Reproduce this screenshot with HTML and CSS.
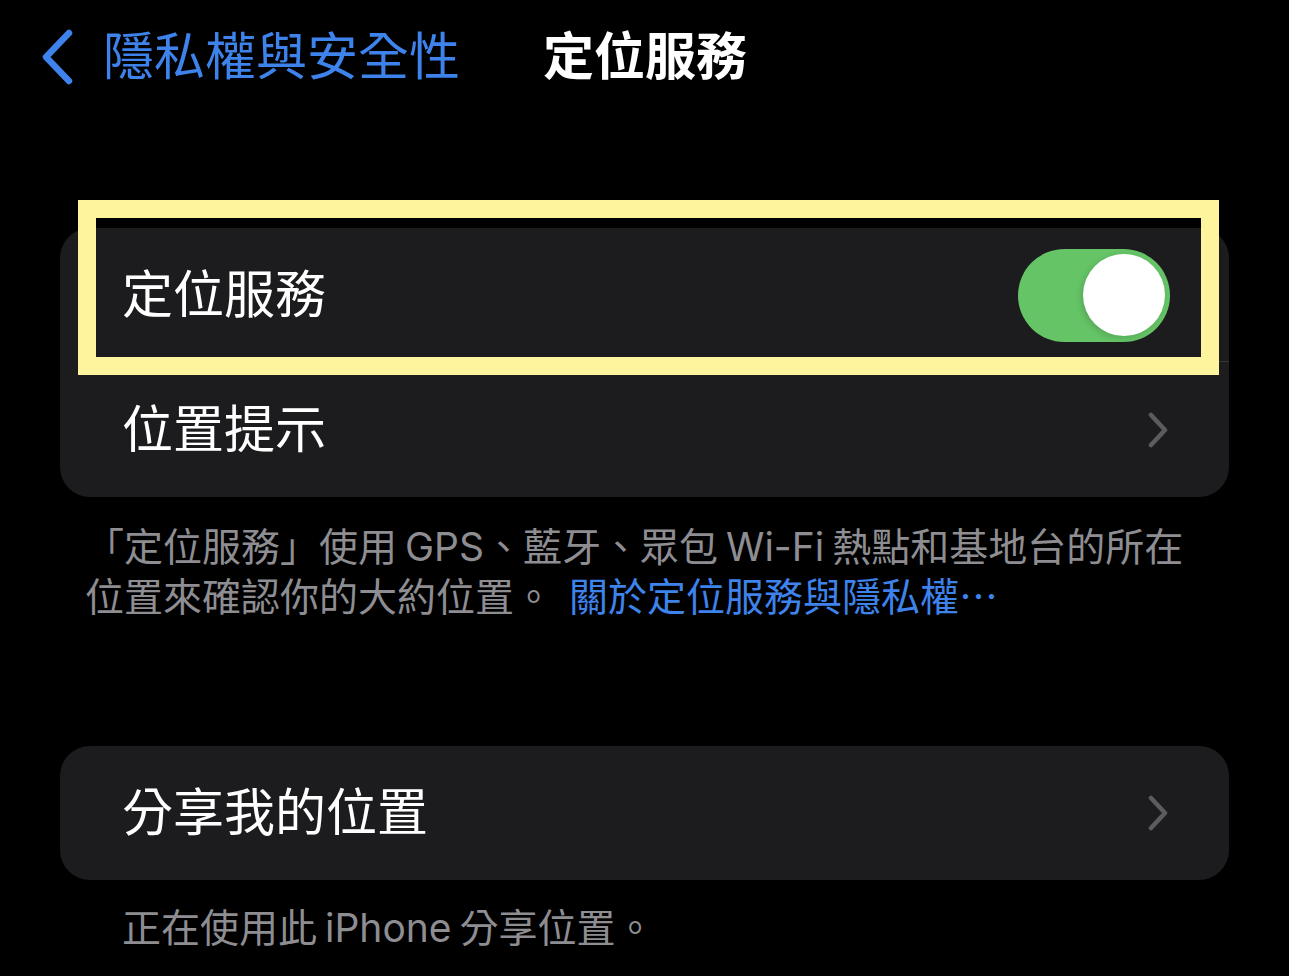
FILE: index.html
```html
<!DOCTYPE html>
<html lang="zh-Hant">
<head>
  <meta charset="UTF-8" />
  <meta name="viewport" content="width=device-width, initial-scale=1.0"/>
  <title>定位服務</title>
  <link rel="stylesheet" href="styles.css">
</head>
<body>

  <header class="navbar">
    <a class="back" href="#">
      <svg class="back-icon" width="36" height="58" viewBox="0 0 36 58">
        <path d="M30 5 L7 29 L30 53" fill="none" stroke="#3e83ec" stroke-width="6.5" stroke-linecap="round" stroke-linejoin="round"/>
      </svg>
      <span class="back-label">隱私權與安全性</span>
    </a>
    <h1 class="title">定位服務</h1>
  </header>

  <main class="content">
    <section class="group first">
      <div class="row">
        <span class="row-label">定位服務</span>
        <div class="toggle on"><div class="knob"></div></div>
      </div>
      <div class="row">
        <span class="row-label">位置提示</span>
        <svg class="chevron" width="24" height="36" viewBox="0 0 24 36">
          <path d="M5 3 L19 18 L5 33" fill="none" stroke="#5b5b60" stroke-width="4.5" stroke-linecap="round" stroke-linejoin="round"/>
        </svg>
      </div>
      <div class="highlight"></div>
    </section>

    <p class="footnote wide">「定位服務」使用 GPS、藍牙、眾包 Wi-Fi 熱點和基地台的所在<br>位置來確認你的大約位置。 <a href="#" class="link">關於定位服務與隱私權⋯</a></p>

    <section class="group second">
      <div class="row">
        <span class="row-label">分享我的位置</span>
        <svg class="chevron" width="24" height="36" viewBox="0 0 24 36">
          <path d="M5 3 L19 18 L5 33" fill="none" stroke="#5b5b60" stroke-width="4.5" stroke-linecap="round" stroke-linejoin="round"/>
        </svg>
      </div>
    </section>

    <p class="footnote">正在使用此 iPhone 分享位置。</p>
  </main>

</body>
</html>
```

FILE: styles.css
```css
body {
  margin: 0;
  width: 1289px;
  height: 976px;
  overflow: hidden;
  background-color: #000;
  color: #fff;
  font-family: Inter, "Noto Sans CJK TC", sans-serif;
}

.navbar {
  height: 114px;
  display: flex;
  align-items: center;
  padding-left: 39px;
}

.back {
  display: flex;
  align-items: center;
  gap: 28px;
  text-decoration: none;
  color: #3e83ec;
}

.back-label {
  font-size: 51px;
  line-height: 60px;
}

.title {
  margin: 0 0 0 83px;
  font-size: 51px;
  line-height: 60px;
  font-weight: 700;
}

.content {
  padding: 0 60px;
}

.group {
  position: relative;
  background-color: #1c1c1e;
  border-radius: 30px;
}

.group.first {
  margin-top: 114px;
}

.group.second {
  margin-top: 124px;
}

.row {
  height: 134px;
  display: flex;
  align-items: center;
  justify-content: space-between;
  padding: 0 59px 0 62px;
  position: relative;
}

.row + .row {
  height: 135px;
}

.row + .row::before {
  content: "";
  position: absolute;
  top: -1px;
  left: 62px;
  right: 0;
  height: 1px;
  background-color: #38383a;
}

.row-label {
  font-size: 51px;
  line-height: 60px;
}

.chevron {
  margin-right: 0;
}

.toggle {
  width: 152px;
  height: 93px;
  border-radius: 47px;
  background-color: #39393d;
  display: flex;
  align-items: center;
  padding: 0 5px;
  box-sizing: border-box;
}

.toggle.on {
  background-color: #65c466;
  justify-content: flex-end;
}

.knob {
  width: 82px;
  height: 82px;
  border-radius: 50%;
  background-color: #fff;
  box-shadow: -2px 2px 6px rgba(0, 0, 0, 0.15);
}

.highlight {
  position: absolute;
  left: 18px;
  top: -28px;
  width: 1141px;
  height: 175px;
  box-sizing: border-box;
  border: 18px solid #fff49e;
}

.footnote {
  margin: 23px 0 0;
  padding-left: 62px;
  font-size: 39px;
  line-height: 50px;
  color: #8d8d92;
  word-spacing: -3px;
}

.footnote.wide {
  margin-top: 25px;
  padding-left: 25px;
}

.link {
  margin-left: 8px;
  color: #3e83ec;
  text-decoration: none;
}
```
